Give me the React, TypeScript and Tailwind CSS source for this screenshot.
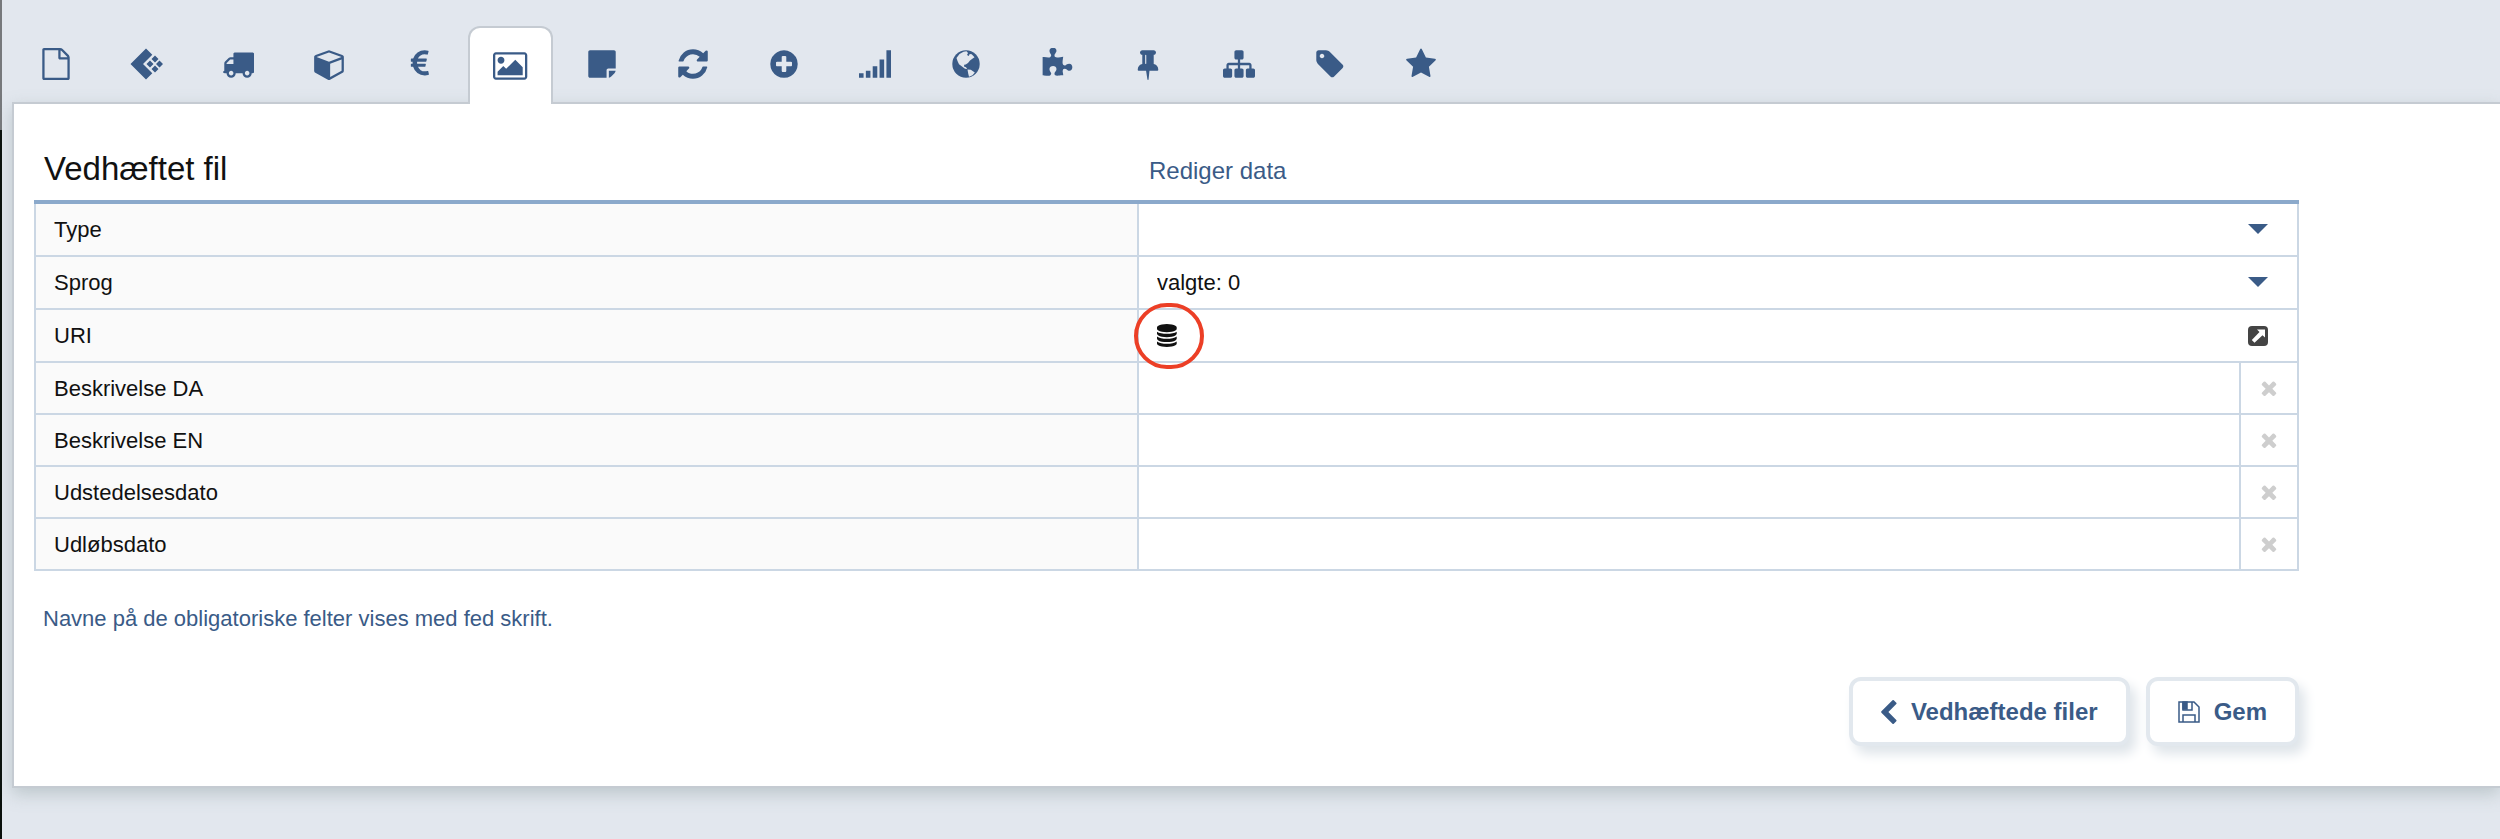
import React from 'react';

type IconProps = { className?: string };

const makeIcon = (d: string, viewBox = '0 0 1792 1792') =>
  function Icon({ className = 'h-8' }: IconProps) {
    return (
      <svg viewBox={viewBox} className={className} fill="currentColor" aria-hidden="true">
        <path d={d} />
      </svg>
    );
  };

const FileIcon = makeIcon('M1596 380q28 28 48 76t20 88v1152q0 40-28 68t-68 28h-1344q-40 0-68-28t-28-68v-1600q0-40 28-68t68-28h896q40 0 88 20t76 48zm-444-244v376h376q-10-29-22-41l-313-313q-12-12-41-22zm384 1528v-1024h-416q-40 0-68-28t-28-68v-416h-768v1536h1280z');
const TruckIcon = makeIcon('M640 1408q0-52-38-90t-90-38-90 38-38 90 38 90 90 38 90-38 38-90zm-384-512h384v-256h-158q-13 0-22 9l-195 195q-9 9-9 22v30zm1280 512q0-52-38-90t-90-38-90 38-38 90 38 90 90 38 90-38 38-90zm256-1088v1024q0 15-4 26.5t-13.5 18.5-16.5 11.5-23.5 6-22.5 2-25.5 0-22.5-.5q0 106-75 181t-181 75-181-75-75-181h-384q0 106-75 181t-181 75-181-75-75-181h-64q-3 0-22.5.5t-25.5 0-22.5-2-23.5-6-16.5-11.5-13.5-18.5-4-26.5q0-26 19-45t45-19v-320q0-8-.5-35t0-38 2.5-34.5 6.5-37 14-30.5 22.5-30l198-198q19-19 50.5-32t58.5-13h160v-192q0-26 19-45t45-19h1024q26 0 45 19t19 45z');
const CubeIcon = makeIcon('M896 1629l640-349v-636l-640 233v752zm-64-865l698-254-698-254-698 254zm832-252v768q0 35-18 65t-49 47l-704 384q-28 16-61 16t-61-16l-704-384q-31-17-49-47t-18-65v-768q0-40 23-73t61-50l704-256q22-8 44-8t44 8l704 256q38 17 61 50t23 73z', '-64 0 1792 1792');
const EuroIcon = makeIcon('M1360 1307l35 159q3 12-3 22.5t-17 14.5l-5 1q-4 2-10.5 3.5t-16 4.5-21.5 5.5-25.5 5-30 5-33.5 4.5-36.5 3-38.5 1q-234 0-409-130.5t-238-351.5h-95q-13 0-22.5-9.5t-9.5-22.5v-113q0-13 9.5-22.5t22.5-9.5h66q-2-57 1-105h-67q-14 0-23-9t-9-23v-114q0-14 9-23t23-9h98q67-210 243.5-338t400.5-128q102 0 194 23 11 3 20 15 6 11 3 24l-43 159q-3 13-14 19.5t-24 2.5l-4-1q-4-1-11.5-2.5l-17.5-3.5-22.5-3.5-26-3-29-2.5-29.5-1q-126 0-226 64t-150 176h468q16 0 25 12 10 12 7 26l-24 114q-5 26-32 26h-488q-3 37 0 105h459q15 0 25 12 9 12 6 27l-24 112q-2 11-11 18.5t-20 7.5h-387q48 117 149.5 185.5t228.5 68.5q18 0 36-1.5t33.5-3.5 29.5-4.5 24.5-5 18.5-4.5l12-3 5-2q13-5 26 2 12 7 15 21z');
const ImageIcon = makeIcon('M576 576q0 80-56 136t-136 56-136-56-56-136 56-136 136-56 136 56 56 136zm1024 384v448h-1408v-192l320-320 160 160 512-512zm96-704h-1600q-13 0-22.5 9.5t-9.5 22.5v1216q0 13 9.5 22.5t22.5 9.5h1600q13 0 22.5-9.5t9.5-22.5v-1216q0-13-9.5-22.5t-22.5-9.5zm160 32v1216q0 66-47 113t-113 47h-1600q-66 0-113-47t-47-113v-1216q0-66 47-113t113-47h1600q66 0 113 47t47 113z', '-64 0 1920 1792');
const NoteIcon = makeIcon('M1152 1248v416h-928q-40 0-68-28t-28-68v-1344q0-40 28-68t68-28h1344q40 0 68 28t28 68v928h-416q-40 0-68 28t-28 68zm128 32h381q-15 82-65 132l-184 184q-50 50-132 65v-381z');
const RefreshIcon = makeIcon('M1639 1056q0 5-1 7-64 268-268 434.5t-478 166.5q-146 0-282.5-55t-243.5-157l-129 129q-19 19-45 19t-45-19-19-45v-448q0-26 19-45t45-19h448q26 0 45 19t19 45-19 45l-137 137q71 66 161 102t187 36q134 0 250-65t186-179q11-17 53-117 8-23 30-23h192q13 0 22.5 9.5t9.5 22.5zm25-800v448q0 26-19 45t-45 19h-448q-26 0-45-19t-19-45 19-45l138-138q-148-137-349-137-134 0-250 65t-186 179q-11 17-53 117-8 23-30 23h-199q-13 0-22.5-9.5t-9.5-22.5v-7q65-268 270-434.5t480-166.5q146 0 284 55.5t245 156.5l130-129q19-19 45-19t45 19 19 45z', '64 64 1664 1664');
const PlusIcon = makeIcon('M1344 960v-128q0-26-19-45t-45-19h-256v-256q0-26-19-45t-45-19h-128q-26 0-45 19t-19 45v256h-256q-26 0-45 19t-19 45v128q0 26 19 45t45 19h256v256q0 26 19 45t45 19h128q26 0 45-19t19-45v-256h256q26 0 45-19t19-45zm320-64q0 209-103 385.5t-279.5 279.5-385.5 103-385.5-103-279.5-279.5-103-385.5 103-385.5 279.5-279.5 385.5-103 385.5 103 279.5 279.5 103 385.5z');
const SignalIcon = makeIcon('M0 1408h256v256h-256zM384 1280h256v384h-256zM768 1024h256v640h-256zM1152 640h256v1024h-256zM1536 128h256v1536h-256z');
const PuzzleIcon = makeIcon('M1755 1083q0 81-44.5 135t-123.5 54q-41 0-77.5-17.5t-59-38-56.5-38-71-17.5q-110 0-110 124 0 39 16 115t15 115v5q-22 0-33 1-34 3-97.5 11.5t-115.5 13.5-98 5q-61 0-103-26.5t-42-83.5q0-37 17.5-71t38-56.5 38-59 17.5-77.5q0-79-54-123.5t-135-44.5q-84 0-143 45.5t-59 127.5q0 43 15 83t33.5 64.5 33.5 53 15 50.5q0 45-46 89-37 35-117 35-95 0-245-24-9-2-27.5-4t-27.5-4l-13-2q-1 0-3-1-2 0-2-1v-1024q2 1 17.5 3.5t34 5 21.5 3.5q150 24 245 24 80 0 117-35 46-44 46-89 0-22-15-50.5t-33.5-53-33.5-64.5-15-83q0-82 59-127.5t144-45.5q80 0 134 44.5t54 123.5q0 41-17.5 77.5t-38 59-38 56.5-17.5 71q0 57 42 83.5t103 26.5q64 0 180-15t163-17v2q-1 2-3.5 17.5t-5 34-3.5 21.5q-24 150-24 245 0 80 35 117 44 46 89 46 22 0 50.5-15t53-33.5 64.5-33.5 83-15q82 0 127.5 59t45.5 143z');
const PinIcon = makeIcon('M800 864v-448q0-14-9-23t-23-9-23 9-9 23v448q0 14 9 23t23 9 23-9 9-23zm672 352q0 26-19 45t-45 19h-429l-51 483q-2 12-10.5 20.5t-20.5 8.5h-1q-27 0-32-27l-76-485h-404q-26 0-45-19t-19-45q0-123 78.5-221.5t177.5-98.5v-512q-52 0-90-38t-38-90 38-90 90-38h640q52 0 90 38t38 90-38 90-90 38v512q99 0 177.5 98.5t78.5 221.5z');
const SitemapIcon = makeIcon('M1792 1248v320q0 40-28 68t-68 28h-320q-40 0-68-28t-28-68v-320q0-40 28-68t68-28h96v-192h-512v192h96q40 0 68 28t28 68v320q0 40-28 68t-68 28h-320q-40 0-68-28t-28-68v-320q0-40 28-68t68-28h96v-192h-512v192h96q40 0 68 28t28 68v320q0 40-28 68t-68 28h-320q-40 0-68-28t-28-68v-320q0-40 28-68t68-28h96v-192q0-52 38-90t90-38h512v-192h-96q-40 0-68-28t-28-68v-320q0-40 28-68t68-28h320q40 0 68 28t28 68v320q0 40-28 68t-68 28h-96v192h512q52 0 90 38t38 90v192h96q40 0 68 28t28 68z');
const TagIcon = makeIcon('M576 448q0-53-37.5-90.5t-90.5-37.5-90.5 37.5-37.5 90.5 37.5 90.5 90.5 37.5 90.5-37.5 37.5-90.5zm1067 576q0 53-37 90l-491 492q-39 37-91 37-53 0-90-37l-715-716q-38-37-64.5-101t-26.5-117v-416q0-52 38-90t90-38h416q53 0 117 26.5t102 64.5l715 714q37 39 37 91z');
const StarIcon = makeIcon('M1728 647q0 22-26 48l-363 354 86 500q1 7 1 20 0 21-10.5 35.5t-30.5 14.5q-19 0-40-12l-449-236-449 236q-22 12-40 12-21 0-31.5-14.5t-10.5-35.5q0-6 2-20l86-500-364-354q-25-27-25-48 0-37 56-46l502-73 225-455q19-41 49-41t49 41l225 455 502 73q56 9 56 46z');
const ChevronIcon = makeIcon('M1427 301l-531 531 531 531q19 19 19 45t-19 45l-166 166q-19 19-45 19t-45-19l-742-742q-19-19-19-45t19-45l742-742q19-19 45-19t45 19l166 166q19 19 19 45t-19 45z', '400 26 1060 1612');
const TimesIcon = makeIcon('M1490 1322q0 40-28 68l-136 136q-28 28-68 28t-68-28l-294-294-294 294q-28 28-68 28t-68-28l-136-136q-28-28-28-68t28-68l294-294-294-294q-28-28-28-68t28-68l136-136q28-28 68-28t68 28l294 294 294-294q28-28 68-28t68 28l136 136q28 28 28 68t-28 68l-294 294 294 294q28 28 28 68z');
const DatabaseIcon = makeIcon('M896 768q237 0 443-43t325-127v170q0 69-103 128t-280 93.5-385 34.5-385-34.5-280-93.5-103-128v-170q119 84 325 127t443 43zm0 768q237 0 443-43t325-127v170q0 69-103 128t-280 93.5-385 34.5-385-34.5-280-93.5-103-128v-170q119 84 325 127t443 43zm0-384q237 0 443-43t325-127v170q0 69-103 128t-280 93.5-385 34.5-385-34.5-280-93.5-103-128v-170q119 84 325 127t443 43zm0-1152q208 0 385 34.5t280 93.5 103 128v128q0 69-103 128t-280 93.5-385 34.5-385-34.5-280-93.5-103-128v-128q0-69 103-128t280-93.5 385-34.5z', '128 0 1536 1792');
const CaretIcon = makeIcon('M0 0h20L10 10z', '0 0 20 10');
const ProductIcon = makeIcon('M16 0.500L22.300 6.800 13 16 22.300 25.200 16 31.500 0.500 16zM25 7.500l3.500 3.500L25 14.500 21.500 11zM20 12.500l3.500 3.500L20 19.500 16.500 16zM29.500 12.500L33 16l-3.500 3.500L26 16zM25 17.500l3.500 3.500L25 24.500 21.500 21z', '0 0 33 32');

const GlobeIcon = ({ className = 'h-8' }: IconProps) => (
  <svg viewBox="0 0 32 32" className={className} aria-hidden="true">
    <circle cx="16" cy="16" r="13.700" fill="currentColor" />
    <path
      fill="#e2e7ee"
      d="M6.500 10L9.500 6l4-2.300 3-.4 1.500 1.700-1 2 1.700 1 1-2 2 .3 2.800 3-2.500 1.700-2 1.500-2 2.500-2.300 1.500-1.500.3-.2 1.700 2 .7 1.200 1.800-2.200-.3-3-2.200-3-2.300-1.500-3.200zM17.500 21.500l3.300.2 4 2.800-2.300 2.700-3.500 1.500-.8-3.200z"
    />
  </svg>
);

const SaveIcon = ({ className = 'h-8' }: IconProps) => (
  <svg viewBox="0 0 22 22" className={className} fill="none" stroke="currentColor" strokeWidth="1.500" aria-hidden="true">
    <path d="M1 1h15l5 5v15H1zM5 1v8h9V1M5 21v-7h12v7" />
    <path d="M5 1h4v7H5z" fill="currentColor" />
  </svg>
);

const OpenIcon = ({ className = 'h-5' }: IconProps) => (
  <svg viewBox="0 0 20 20" className={className} aria-hidden="true">
    <rect width="20" height="20" rx="4" fill="#444" />
    <path d="M9 3.500h8v8l-2.500-2.300-8 7.500-2.700-2.600 7.700-8z" fill="#fff" />
  </svg>
);

const tabs = [
  { name: 'Dokument', Icon: FileIcon },
  { name: 'Produkt', Icon: ProductIcon },
  { name: 'Levering', Icon: TruckIcon },
  { name: 'Pakke', Icon: CubeIcon },
  { name: 'Pris', Icon: EuroIcon },
  { name: 'Filer', Icon: ImageIcon },
  { name: 'Note', Icon: NoteIcon },
  { name: 'Opdater', Icon: RefreshIcon },
  { name: 'Tilføj', Icon: PlusIcon },
  { name: 'Statistik', Icon: SignalIcon },
  { name: 'Web', Icon: GlobeIcon },
  { name: 'Moduler', Icon: PuzzleIcon },
  { name: 'Fastgør', Icon: PinIcon },
  { name: 'Struktur', Icon: SitemapIcon },
  { name: 'Mærke', Icon: TagIcon },
  { name: 'Favorit', Icon: StarIcon },
];

const textFields = [
  { id: 'desc-da', label: 'Beskrivelse DA' },
  { id: 'desc-en', label: 'Beskrivelse EN' },
  { id: 'issued', label: 'Udstedelsesdato' },
  { id: 'expires', label: 'Udløbsdato' },
];

const labelCell = 'border-2 border-[#cbd7e4] bg-[#fafafa] pl-[18px] text-left font-normal';
const valueCell = 'border-2 border-[#cbd7e4] p-0';
const actionButton = 'flex h-[69px] items-center gap-[14px] rounded-xl border-4 border-[#e2e8ee] bg-white px-7 shadow-[6px_8px_12px_#dfe5ea]';

const SelectCell = ({ id, value }: { id: string; value: string }) => (
  <td colSpan={2} className={valueCell}>
    <div className="relative">
      <select id={id} className="block h-[51px] w-full appearance-none bg-transparent px-[18px] outline-none">
        <option>{value}</option>
      </select>
      <CaretIcon className="pointer-events-none absolute right-[29px] top-5 h-[10px] text-[#3a5b87]" />
    </div>
  </td>
);

const TabBar = () => (
  <nav className="relative z-10 -mb-[2px] -ml-[2px] flex items-end text-[#3a5b87]">
    {tabs.map(({ name, Icon }) => (
      <button
        key={name}
        type="button"
        aria-label={name}
        className={
          name === 'Filer'
            ? 'mx-[3px] flex h-[78px] w-[85px] items-center justify-center rounded-t-xl border-2 border-b-0 border-[#c5cbd2] bg-white'
            : 'flex h-[78px] w-[91px] items-center justify-center pb-[2px]'
        }
      >
        <Icon className="h-8" />
      </button>
    ))}
  </nav>
);

const App = () => {
  return (
    <div className="flex min-h-screen bg-[#e2e7ee] font-['Liberation_Sans',Arial,sans-serif] text-[22px] text-[#111]">
      <div className="w-[2px] shrink-0 bg-[linear-gradient(#77797c_0_130px,#0a100c_130px)]" />
      <div className="min-w-0 flex-1 pl-[10px] pt-[26px]">
        <TabBar />
        <main className="border-2 border-r-0 border-[#c5cbd2] bg-white pb-[40px] pl-5 pr-[201px] pt-[38px] shadow-[0_6px_16px_rgba(120,140,140,0.35)]">
          <form>
            <table className="w-full table-fixed border-collapse">
              <colgroup>
                <col className="w-[1103px]" />
                <col />
                <col className="w-[58px]" />
              </colgroup>
              <thead>
                <tr className="h-[58px] border-b-4 border-[#8ba9cb] text-left">
                  <th className="pl-[9px] pb-1 text-[33px] leading-[54px] font-normal">Vedhæftet fil</th>
                  <th colSpan={2} className="pl-[11px] text-2xl font-normal text-[#3a5b87]">Rediger data</th>
                </tr>
              </thead>
              <tbody>
                <tr>
                  <th className={labelCell}><label htmlFor="type">Type</label></th>
                  <SelectCell id="type" value="" />
                </tr>
                <tr>
                  <th className={labelCell}><label htmlFor="language">Sprog</label></th>
                  <SelectCell id="language" value="valgte: 0" />
                </tr>
                <tr>
                  <th className={labelCell}>URI</th>
                  <td colSpan={2} className={valueCell}>
                    <div className="relative flex h-[51px] items-center justify-between pl-[18px] pr-[29px]">
                      <button type="button" aria-label="Database"><DatabaseIcon className="h-[23px]" /></button>
                      <button type="button" aria-label="Åbn"><OpenIcon /></button>
                      <span className="pointer-events-none absolute -left-[5px] -top-[7px] z-10 h-[66px] w-[70px] rounded-full border-4 border-[#ec3f26]" />
                    </div>
                  </td>
                </tr>
                {textFields.map(({ id, label }) => (
                  <tr key={id}>
                    <th className={labelCell}><label htmlFor={id}>{label}</label></th>
                    <td className={valueCell}>
                      <input id={id} type="text" className="block h-[50px] w-full px-[18px] outline-none" />
                    </td>
                    <td className={valueCell}>
                      <button type="button" aria-label={`Ryd ${label}`} className="flex h-[50px] w-full items-center justify-center text-[#cecece]">
                        <TimesIcon className="h-[22px]" />
                      </button>
                    </td>
                  </tr>
                ))}
              </tbody>
            </table>

            <p className="mt-8 pl-[9px] leading-8 text-[#3a5b87]">Navne på de obligatoriske felter vises med fed skrift.</p>

            <div className="mt-[42px] flex justify-end gap-4 text-2xl font-bold text-[#3a5b87]">
              <button type="button" className={actionButton}>
                <ChevronIcon className="h-6" />
                Vedhæftede filer
              </button>
              <button type="button" className={actionButton}>
                <SaveIcon className="h-[22px]" />
                Gem
              </button>
            </div>
          </form>
        </main>
      </div>
    </div>
  );
};

export default App;
